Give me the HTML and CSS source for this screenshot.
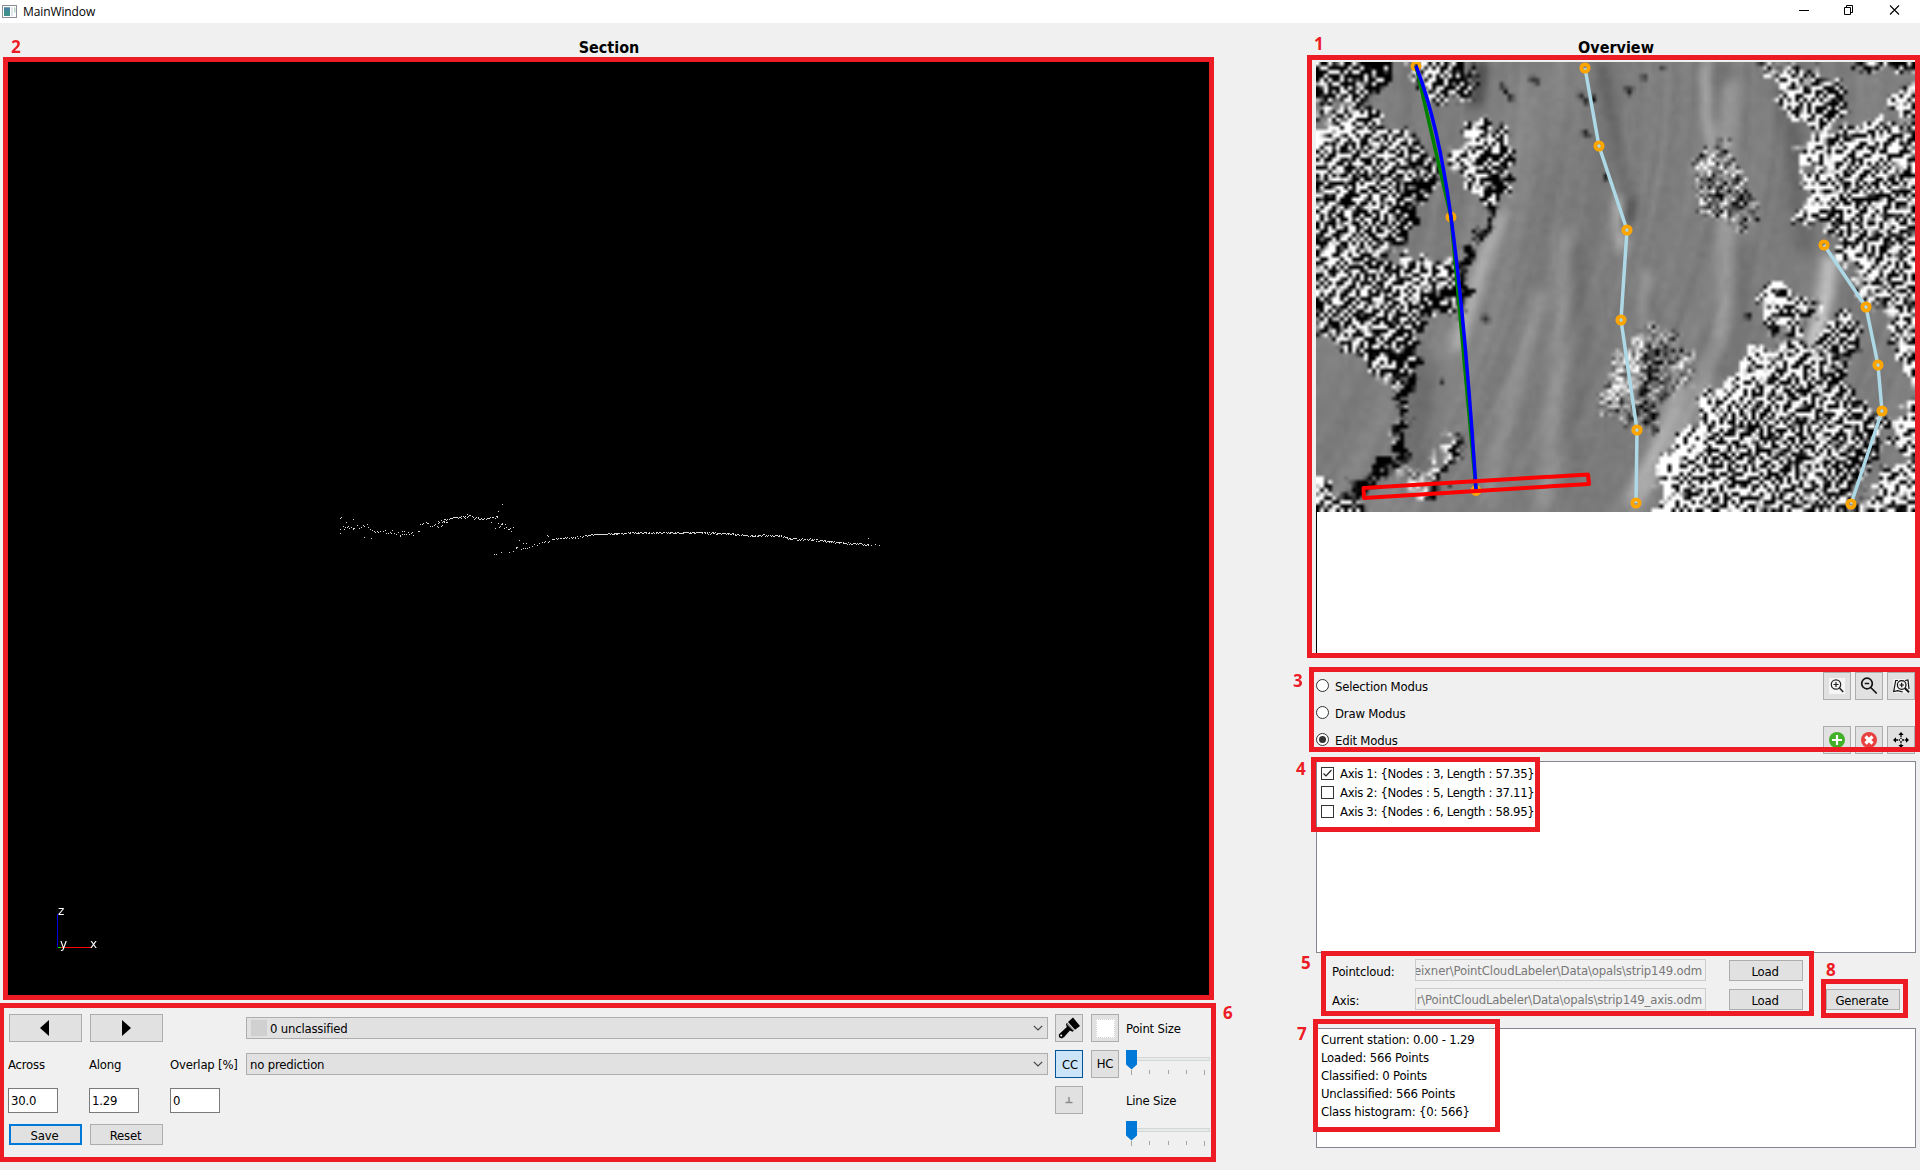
FILE: index.html
```html
<!DOCTYPE html>
<html lang="en">
<head>
<meta charset="utf-8">
<title>MainWindow</title>
<link rel="stylesheet" href="styles.css">
</head>
<body>
<header class="titlebar">
  <svg class="app-icon" width="15" height="13" viewBox="0 0 15 13"><rect x=".5" y=".5" width="14" height="12" fill="#fff" stroke="#8c9096"/><rect x="2" y="2.5" width="6" height="8.500" fill="#3f8f8c"/><rect x="2" y="2.500" width="6" height="3" fill="#4a7fa5"/><rect x="9" y="2.500" width="2" height="8.500" fill="#dfe5e8"/><rect x="12" y="2.500" width="1.500" height="5" fill="#b9d3c6"/></svg>
  <span class="title">MainWindow</span>
  <svg class="win-controls" width="104" height="14" viewBox="0 0 104 14" fill="none" stroke="#000" stroke-width="1"><path d="M1 7.500H11"/><path d="M46.500 4.500h6v7h-6zM48.500 4.500v-2h6v7h-2" /><path d="M92 2.500l9 9M101 2.500l-9 9" stroke-width="1.100"/></svg>
</header>

<main class="content">
  <section class="left">
    <h1 class="heading">Section</h1>
    <div class="view3d">
      <canvas id="points" width="1201" height="933"></canvas>
      <svg class="axes" width="60" height="60" viewBox="0 0 60 60"><path d="M9.500 17v33" stroke="#0000d8"/><path d="M12 50.500h31" stroke="#f00"/><path d="M10 50.500h3" stroke="#0f0"/><text x="10" y="18">z</text><text x="12" y="51">y</text><text x="42" y="51">x</text></svg>
    </div>
    <div class="tools">
      <button class="btn step"><svg width="10" height="16" viewBox="0 0 10 16"><path d="M9 0v16L0 8z"/></svg></button>
      <button class="btn step narrow"><svg width="10" height="16" viewBox="0 0 10 16"><path d="M1 0v16l9-8z"/></svg></button>
      <span></span>
      <div class="combo"><i class="swatch"></i><span>0 unclassified</span><svg class="chev" width="10" height="6" viewBox="0 0 10 6"><path d="M.8.800L5 5 9.200.8"/></svg></div>
      <button class="btn sq"><svg width="22" height="22" viewBox="0 0 22 22"><path d="M10 5l5-4.500L22 9l-5 3.800z"/><path d="M9 6l7.200 7.600-1.700 1.200-2.600-1.300-5.700 6.400-2.500 1.700L1 20.300.8 17.500l8-7.500-1-3z"/><circle cx="3.200" cy="18.500" r="1" fill="#fff"/><path d="M8.500 6.700l7 7" stroke="#e1e1e1" stroke-width=".7"/></svg></button>
      <button class="btn sq"><i class="blank"></i></button>
      <span class="lbl">Point Size</span>

      <span class="lbl">Across</span><span class="lbl">Along</span><span class="lbl">Overlap [%]</span>
      <div class="combo plain"><span>no prediction</span><svg class="chev" width="10" height="6" viewBox="0 0 10 6"><path d="M.8.800L5 5 9.200.8"/></svg></div>
      <button class="btn sq on">CC</button>
      <button class="btn sq">HC</button>
      <svg class="slider" width="84" height="28" viewBox="0 0 84 28"><rect x=".5" y="7.500" width="83" height="3" fill="#e7eaea" stroke="#d3d7d5"/><path d="M0 0h11v14.500l-5.500 5L0 14.500z" fill="#0078d7"/><path d="M5.500 20v5M23.500 20v4M42.500 20v4M60.500 20v4M78.500 20v5" stroke="#aaa69a"/></svg>

      <div class="field">30.0</div><div class="field">1.29</div><div class="field">0</div>
      <span></span>
      <button class="btn sq"><svg width="8" height="7" viewBox="0 0 8 7"><path d="M4 0v5M.5 5.500h7" stroke="#8d8d8d" stroke-width="1.500"/></svg></button>
      <span></span>
      <span class="lbl">Line Size</span>

      <button class="btn small focus">Save</button>
      <button class="btn small narrow">Reset</button>
      <span></span><span></span><span></span><span></span>
      <svg class="slider" width="84" height="28" viewBox="0 0 84 28"><rect x=".5" y="7.500" width="83" height="3" fill="#e7eaea" stroke="#d3d7d5"/><path d="M0 0h11v14.500l-5.500 5L0 14.500z" fill="#0078d7"/><path d="M5.500 20v5M23.500 20v4M42.500 20v4M60.500 20v4M78.500 20v5" stroke="#aaa69a"/></svg>
    </div>
  </section>

  <section class="right">
    <h1 class="heading">Overview</h1>
    <div class="overview">
      <canvas id="terrain" width="150" height="113"></canvas>
      <svg class="axis-lines" width="599" height="450" viewBox="1316 62 599 450" fill="none">
        <g stroke="#ffa500" stroke-width="3.500"><circle cx="1416" cy="66" r="3.700"/><circle cx="1451" cy="217" r="3.700"/><circle cx="1476" cy="490.500" r="3.700"/></g>
        <path d="M1416 66L1451 217L1476 490" stroke="#008000" stroke-width="3.500"/>
        <path d="M1416 66Q1438 122 1451 217Q1465 320 1476 489" stroke="#00f" stroke-width="3.500"/>
        <g stroke="#add8e6" stroke-width="3.500"><path d="M1585 68L1599 146L1627 230L1621 320L1637 430L1636 503"/><path d="M1824 245L1866 307L1878 365L1882 411L1851 504"/></g>
        <g stroke="#ffa500" stroke-width="3.700"><circle cx="1585" cy="68" r="3.700"/><circle cx="1599" cy="146" r="3.700"/><circle cx="1627" cy="230" r="3.700"/><circle cx="1621" cy="320" r="3.700"/><circle cx="1637" cy="430" r="3.700"/><circle cx="1636" cy="503" r="3.700"/><circle cx="1824" cy="245" r="3.700"/><circle cx="1866" cy="307" r="3.700"/><circle cx="1878" cy="365" r="3.700"/><circle cx="1882" cy="411" r="3.700"/><circle cx="1851" cy="504" r="3.700"/></g>
        <path d="M1363.500 488L1588 474.500L1589 484L1364 498z" stroke="#f00" stroke-width="4" stroke-linejoin="round"/>
      </svg>
    </div>

    <div class="modes">
      <div class="radios">
        <label class="radio"><i></i><span>Selection Modus</span></label>
        <label class="radio"><i></i><span>Draw Modus</span></label>
        <label class="radio checked"><i></i><span>Edit Modus</span></label>
      </div>
      <div class="icons">
        <button class="btn sq"><svg width="16" height="16" viewBox="0 0 16 16" fill="none" stroke="#222" stroke-width="1.200"><path d="M0 0h16v16H0z" fill="#f5f5f5" stroke="none"/><circle cx="7" cy="6.500" r="4.700"/><path d="M4.500 6.500h5M7 4v5"/><path d="M10.500 10l3.700 4" stroke-width="1.500"/></svg></button>
        <button class="btn sq"><svg width="18" height="18" viewBox="0 0 18 18" fill="none" stroke="#111" stroke-width="1.700"><circle cx="7" cy="6.500" r="5.300"/><path d="M4.700 6.500h4.500" stroke-width="1.500"/><path d="M10.700 10.500l6 6"/></svg></button>
        <button class="btn sq"><svg width="17" height="16" viewBox="0 0 17 16" fill="none" stroke="#111" stroke-width="1.200"><path d="M0 1h17v14H0z" fill="#f3f3f3" stroke="none"/><path d="M5 2.500H2.700L.7 13.500l4-.8 5 1.300M12 2.500l3-.5 1 9"/><circle cx="8.700" cy="7" r="4.300"/><path d="M6.500 7h4.400M8.700 4.800v4.400"/><path d="M12 10.300l4 4" stroke-width="2"/></svg></button>
        <button class="btn sq"><svg width="16" height="16" viewBox="0 0 16 16"><circle cx="8" cy="8" r="8" fill="#43b02a"/><path d="M8 3v10M3 8h10" stroke="#fff" stroke-width="2.200"/></svg></button>
        <button class="btn sq"><svg width="16" height="16" viewBox="0 0 16 16"><circle cx="8" cy="8" r="8" fill="#e8403f"/><path d="M4.500 4.500l7 7M11.500 4.500l-7 7" stroke="#fff" stroke-width="3.200"/></svg></button>
        <button class="btn sq"><svg width="16" height="16" viewBox="0 0 16 16"><path d="M8 0l2.700 3H5.300zM8 16l2.700-3H5.300zM0 8l3-2.700v5.400zM16 8l-3-2.700v5.400z"/><path d="M8 3v4M8 9v4M3 8h4M9 8h4" stroke="#000" stroke-width="1.300" stroke-dasharray="2 .7"/></svg></button>
      </div>
    </div>

    <div class="list">
      <label class="item"><i><svg width="11" height="11" viewBox="0 0 11 11" fill="none" stroke="#222" stroke-width="1.200"><path d="M1.500 5.500L4 8l5.500-6"/></svg></i>Axis 1: {Nodes : 3, Length : 57.35}</label>
      <label class="item"><i></i>Axis 2: {Nodes : 5, Length : 37.11}</label>
      <label class="item"><i></i>Axis 3: {Nodes : 6, Length : 58.95}</label>
    </div>

    <div class="files">
      <span class="lbl">Pointcloud:</span><div class="path"><span>eixner\PointCloudLabeler\Data\opals\strip149.odm</span></div><button class="btn load">Load</button><span></span>
      <span class="lbl">Axis:</span><div class="path"><span>r\PointCloudLabeler\Data\opals\strip149_axis.odm</span></div><button class="btn load">Load</button><button class="btn load">Generate</button>
    </div>

    <div class="log">
      <p>Current station: 0.00 - 1.29</p>
      <p>Loaded: 566 Points</p>
      <p>Classified: 0 Points</p>
      <p>Unclassified: 566 Points</p>
      <p>Class histogram: {0: 566}</p>
    </div>
  </section>
</main>

<div class="mark m1"><b>1</b></div>
<div class="mark m2"><b>2</b></div>
<div class="mark m3"><b>3</b></div>
<div class="mark m4"><b>4</b></div>
<div class="mark m5"><b>5</b></div>
<div class="mark m6"><b>6</b></div>
<div class="mark m7"><b>7</b></div>
<div class="mark m8"><b>8</b></div>
<script src="draw.js"></script>
</body>
</html>
```

FILE: styles.css
```css
* { box-sizing: border-box; }
body {
  margin: 0; width: 1920px; height: 1170px; overflow: hidden; position: relative;
  background: #f0f0f0; color: #000;
  font: 13px/18px "DejaVu Sans Condensed", "DejaVu Sans", sans-serif;
  font-stretch: condensed; letter-spacing: -0.2px;
}
svg, canvas { display: block; }

.titlebar { display: flex; align-items: center; height: 23px; padding: 0 18px 0 2px; background: #fff; }
.title { flex: 1; margin-left: 6px; font: 12px/22px "Open Sans", sans-serif; letter-spacing: -0.1px; }
.win-controls { margin-top: -3px; }

.content { display: flex; justify-content: space-between; padding: 0 4px 0 8px; }
.left { width: 1202px; }
.right { width: 600px; }
.heading { margin: 0; height: 39px; padding-top: 5px; text-align: center; font-size: 16px; line-height: 40px; font-weight: 700; letter-spacing: 0; }

.view3d { position: relative; height: 933px; width: 1201px; background: #000; }
.axes { position: absolute; left: 40px; top: 835px; font: 12px "DejaVu Sans", sans-serif; fill: #fff; letter-spacing: 0; }

.tools { display: grid; grid-template-columns: 81px 81px 76px 809px 36px 35px 84px; grid-template-rows: repeat(4, 28px); row-gap: 8px; padding-top: 19px; align-items: center; }
.btn { display: flex; align-items: center; justify-content: center; padding: 0; border: 1px solid #adadad; background: #e1e1e1; color: #000; font: inherit; letter-spacing: inherit; }
.step { width: 73px; height: 28px; margin-left: 1px; padding-right: 1px; }
.sq { width: 28px; height: 28px; }
.on { background: #cce4f7; border-color: #005499; padding: 2px 0 0 2px; }
.small { width: 73px; height: 21px; margin-left: 1px; margin-top: -3px; padding: 2px 2px 0 0; }
.focus { border: 2px solid #0078d7; }
.lbl { white-space: nowrap; padding-top: 2px; }
.combo { display: flex; align-items: center; width: 802px; height: 22px; padding: 0 4px 0 4px; border: 1px solid #adadad; background: #e1e1e1; }
.combo span { padding-top: 2px; }
.combo .swatch { width: 16px; height: 16px; margin-right: 3px; background: #d0d0d0; }
.combo.plain { padding-left: 3px; }
.combo .chev { margin-left: auto; fill: none; stroke: #444; stroke-width: 1.200; }
.blank { width: 19px; height: 19px; background: #fff; border: 1px dotted #d4d4d4; }
.field { width: 50px; height: 25px; padding: 3px 2px; border: 1px solid #7a7a7a; background: #fff; }
.slider { overflow: visible; }
.tools .slider:last-child { margin-top: -2px; }

.overview { position: relative; height: 591px; background: #fff; border-left: 1px solid #000; margin-right: 1px; }
#terrain { width: 599px; height: 450px; margin-left: -1px; }
.axis-lines { position: absolute; left: -1px; top: 0; }

.modes { display: flex; justify-content: space-between; height: 82px; margin: 19px 1px 7px 0; }
.radio { display: flex; align-items: center; height: 27px; }
.radio span { padding-top: 2px; }
.radio i { display: flex; align-items: center; justify-content: center; width: 13px; height: 13px; margin-right: 6px; border: 1px solid #333; border-radius: 50%; background: #fff; }
.radio.checked i::after { content: ""; width: 7px; height: 7px; border-radius: 50%; background: #333; }
.icons { display: grid; grid-template-columns: repeat(3, 28px); gap: 26px 4px; }

.list { height: 192px; padding: 2px 4px; border: 1px solid #828790; background: #fff; }
.item { display: flex; align-items: center; height: 19px; letter-spacing: -0.33px; }
.item i { width: 13px; height: 13px; margin-right: 6px; border: 1px solid #333; background: #fff; }

.files { display: grid; grid-template-columns: 83px 314px 97px 74px; grid-template-rows: 23px 23px; row-gap: 6px; padding: 6px 0 0 16px; height: 75px; align-items: start; }
.path { display: flex; justify-content: flex-end; overflow: hidden; width: 291px; height: 22px; padding: 2px 3px 0 0; border: 1px solid #ccc; background: #f0f0f0; color: #787878; white-space: nowrap; letter-spacing: -0.16px; }
.load { width: 74px; height: 21px; margin-top: 1px; padding: 2px 2px 0 0; }
.files .lbl { padding-top: 4px; }

.log { height: 120px; padding: 2px 4px; border: 1px solid #828790; background: #fff; }
.log p { margin: 0; height: 18px; }

.mark { position: absolute; border: 5px solid #ed1c24; }
.mark b { position: absolute; color: #ed1c24; font: 700 17px/18px "Open Sans", sans-serif; letter-spacing: 0; }
.m1 { left: 1307px; top: 55px; width: 613px; height: 603px; }
.m1 b { left: 2px; top: -25px; }
.m2 { left: 3px; top: 57px; width: 1211px; height: 943px; }
.m2 b { left: 3px; top: -24px; }
.m3 { left: 1309px; top: 667px; width: 611px; height: 85px; }
.m3 b { left: -21px; top: 0; }
.m4 { left: 1311px; top: 757px; width: 229px; height: 75px; }
.m4 b { left: -20px; top: -2px; }
.m5 { left: 1321px; top: 951px; width: 493px; height: 65px; }
.m5 b { left: -25px; top: -2px; }
.m6 { left: -1px; top: 1003px; width: 1217px; height: 159px; }
.m6 b { left: 1219px; top: -4px; }
.m7 { left: 1313px; top: 1019px; width: 187px; height: 113px; }
.m7 b { left: -21px; top: 1px; }
.m8 { left: 1821px; top: 979px; width: 87px; height: 39px; }
.m8 b { left: 0; top: -23px; }
```

FILE: draw.js
```js
let seed = 7;
function rnd() { seed = (seed * 1664525 + 1013904223) >>> 0; return seed / 4294967296; }

// Point cloud profile
(function () {
  const g = document.getElementById('points').getContext('2d');
  g.fillStyle = '#d8d8d8';
  const dot = (x, y) => g.fillRect(Math.round(x / 2.703 + 312), Math.round(y / 3 + 428), 1, 1);
  const run = (pts, step, jit) => {
    for (let i = 0; i < pts.length - 1; i++) {
      const [a, b] = pts[i], [c, d] = pts[i + 1];
      for (let x = a; x < c; x += step * (0.5 + rnd())) dot(x, b + (d - b) * (x - a) / (c - a) + (rnd() - 0.5) * jit);
    }
  };
  run([[512, 187], [530, 175], [560, 172], [600, 160], [630, 147]], 6, 7);
  run([[630, 147], [690, 142], [735, 133]], 3.5, 6);
  run([[735, 133], [800, 130], [860, 128], [1040, 127]], 2.3, 3.500);
  run([[1040, 127], [1100, 131], [1180, 136], [1240, 136], [1280, 147], [1330, 148], [1375, 155], [1440, 160], [1485, 164]], 2.5, 6);
  run([[55, 110], [90, 116], [120, 106], [150, 119], [200, 128], [255, 130]], 4.5, 14);
  run([[265, 115], [290, 100], [320, 108], [345, 94]], 4, 20);
  run([[320, 95], [360, 84], [400, 79], [440, 86], [480, 80]], 3, 8);
  run([[480, 102], [500, 108], [523, 118]], 3, 20);
  [[55, 84], [57, 82], [90, 88], [69, 97], [55, 130], [120, 142], [139, 145], [217, 139], [396, 73], [493, 43], [480, 64],
   [461, 97], [474, 115], [471, 193], [477, 193], [488, 187], [537, 151], [550, 160], [558, 160], [613, 136], [616, 137],
   [1482, 145], [1490, 164], [1500, 163], [1510, 164]].forEach(p => dot(p[0], p[1]));
})();

// Hillshade: smooth riverbed with rough tree canopies
(function () {
  const W = 150, H = 113, S = 4;
  const layer = bg => {
    const c = document.createElement('canvas'); c.width = W; c.height = H;
    const g = c.getContext('2d', { willReadFrequently: true });
    g.fillStyle = bg; g.fillRect(0, 0, W, H); g.scale(1 / S, 1 / S); return g;
  };
  const trace = (g, p) => { g.beginPath(); p.forEach(([x, y], i) => i ? g.lineTo(x, y) : g.moveTo(x, y)); };

  const base = layer('#808080');
  const soft = (p, col, w, blur) => { base.filter = 'blur(' + blur * .8 + 'px)'; base.strokeStyle = col; base.lineWidth = w; base.lineJoin = 'round'; trace(base, p); base.stroke(); };
  soft([[230, 0], [190, 130], [150, 260], [60, 450]], 'rgba(150,150,150,.5)', 50, 4);
  soft([[390, 0], [392, 60], [398, 90]], '#b8b8b8', 7, 1);
  soft([[403, 0], [405, 60]], '#686868', 9, 1);
  soft([[415, 20], [408, 90], [412, 225], [405, 290], [370, 355], [335, 410], [315, 450]], '#a4a4a4', 14, 2);
  soft([[430, 180], [425, 270], [400, 320]], '#6c6c6c', 14, 2);
  soft([[186, 150], [165, 210], [140, 290]], '#b0b0b0', 13, 1.5);
  soft([[285, 0], [300, 70], [310, 130], [318, 160]], '#646464', 8, 1);
  soft([[302, 135], [306, 190]], '#d8d8d8', 6, 1);
  soft([[320, 138], [308, 168]], '#484848', 5, 1);
  soft([[330, 210], [330, 285]], '#b4b4b4', 6, 1);
  soft([[336, 230], [335, 300]], '#565656', 4, 1);
  soft([[250, 170], [245, 270], [228, 450]], '#999', 16, 2);
  soft([[262, 180], [268, 280], [255, 400]], '#727272', 11, 2);
  soft([[225, 230], [195, 340], [170, 440]], '#9c9c9c', 12, 2);
  soft([[465, 20], [480, 90], [490, 190]], '#666', 15, 2);
  soft([[515, 195], [508, 240], [495, 290]], '#c4c4c4', 15, 1.500);
  soft([[365, 320], [350, 370], [320, 440]], '#b6b6b6', 12, 2);
  soft([[110, 300], [95, 420]], '#696969', 25, 3);
  soft([[165, 0], [160, 45]], '#404040', 14, 2);
  base.filter = 'none'; base.fillStyle = '#080808';
  [[214, 15, 5, 4], [219, 18, 5, 4], [184, 22, 4, 4], [188, 27, 4, 5], [193, 32, 4, 7], [263, 31, 4, 6], [268, 37, 5, 5], [276, 34, 4, 6],
   [309, 26, 9, 3], [312, 29, 4, 4], [327, 12, 3, 7], [346, 4, 3, 4], [267, 68, 4, 6], [271, 72, 3, 3], [289, 112, 3, 7], [166, 255, 7, 3], [170, 258, 3, 4],
   [453, 228, 9, 7], [430, 252, 6, 6], [455, 272, 7, 3], [124, 319, 4, 4]].forEach(r => base.fillRect(...r));

  // Red carries canopy roughness, green carries tone (128 = neutral)
  const mask = layer('#008000');
  mask.lineJoin = 'round';
  const tree = (p, rough, tone) => {
    mask.fillStyle = mask.strokeStyle = 'rgb(' + rough + ',' + (tone || 128) + ',0)';
    mask.lineWidth = rough > 200 ? 8 : 1; trace(mask, p); mask.closePath(); mask.fill(); mask.stroke();
  };
  const ridge = (p, w, rough, tone) => { mask.lineWidth = w; mask.strokeStyle = 'rgb(' + rough + ',' + tone + ',0)'; trace(mask, p); mask.stroke(); };
  ridge([[186, 126], [168, 168], [150, 200], [140, 250]], 12, 160, 0);
  ridge([[98, 285], [88, 335], [85, 400]], 12, 165, 0);
  ridge([[85, 398], [55, 415], [30, 445]], 15, 165, 0);
  ridge([[150, 370], [130, 405], [112, 445]], 10, 150, 0);
  ridge([[139, 368], [122, 410]], 7, 150, 240);
  ridge([[76, 310], [78, 325]], 9, 150, 240);
  ridge([[80, 355], [76, 395]], 5, 100, 200);
  tree([[0, 0], [75, 0], [72, 18], [50, 30], [20, 36], [0, 52]], 210, 90);
  tree([[100, 0], [150, 0], [150, 30], [125, 42], [105, 25]], 220, 110);
  tree([[35, 42], [62, 50], [60, 68], [95, 75], [115, 100], [118, 120], [95, 150], [92, 175], [75, 185], [30, 182], [0, 197], [0, 110], [10, 60]], 255, 132);
  tree([[155, 65], [180, 62], [195, 100], [185, 135], [165, 130], [140, 105]], 240, 130);
  tree([[0, 205], [40, 190], [60, 200], [125, 200], [140, 215], [135, 250], [110, 255], [95, 290], [90, 318], [70, 312], [40, 292], [15, 278], [0, 250]], 240, 134);
  tree([[0, 420], [25, 430], [45, 450], [0, 450]], 230, 130);
  tree([[85, 404], [122, 412], [105, 440], [88, 430]], 120, 190);
  tree([[390, 85], [405, 75], [425, 110], [440, 145], [440, 160], [412, 170], [405, 160], [385, 160], [380, 110]], 165, 130);
  tree([[460, 15], [480, 10], [520, 20], [528, 45], [510, 65], [490, 65], [475, 45]], 240, 140);
  tree([[600, 20], [575, 40], [590, 60], [600, 55]], 230, 130);
  tree([[540, 0], [600, 0], [600, 6], [545, 7]], 200, 60);
  tree([[440, 0], [475, 0], [465, 14]], 150, 90);
  tree([[490, 80], [560, 60], [580, 75], [600, 68], [600, 238], [575, 250], [555, 240], [530, 195], [520, 165], [490, 155], [496, 110]], 250, 132);
  tree([[450, 235], [470, 225], [500, 245], [480, 265], [465, 270], [448, 260]], 210, 130);
  tree([[505, 265], [530, 255], [543, 280], [535, 297], [512, 287]], 230, 130);
  tree([[585, 250], [600, 240], [600, 325], [590, 300], [578, 280]], 240, 140);
  tree([[310, 290], [330, 265], [345, 265], [385, 300], [375, 320], [340, 345], [345, 370], [310, 368], [285, 350], [290, 315]], 100, 128);
  ridge([[322, 275], [308, 315], [298, 345]], 10, 120, 215);
  ridge([[338, 285], [328, 340], [335, 370]], 8, 130, 20);
  ridge([[378, 295], [348, 318]], 7, 130, 230);
  ridge([[355, 288], [338, 318]], 6, 130, 20);
  tree([[465, 283], [500, 290], [525, 310], [545, 350], [565, 360], [560, 395], [540, 420], [530, 450], [345, 450], [350, 410], [375, 370], [400, 325], [425, 315], [432, 300]], 255, 132);
  tree([[600, 350], [575, 370], [590, 390], [600, 395], [575, 410], [570, 430], [545, 440], [550, 452], [600, 452]], 240, 150);

  // Blurred copy of the canopy height gives the large-scale dome shading
  const dome = document.createElement('canvas'); dome.width = W; dome.height = H;
  const dg = dome.getContext('2d', { willReadFrequently: true });
  dg.filter = 'blur(3.5px)'; dg.drawImage(mask.canvas, 0, 0);

  const B = base.getImageData(0, 0, W, H).data, M = mask.getImageData(0, 0, W, H).data, D = dg.getImageData(0, 0, W, H).data;
  const h = Array.from({ length: (W + 4) * (H + 4) }, rnd);
  const lat = Array.from({ length: 4096 }, rnd);
  const noise = (x, y) => {
    const i = Math.floor(x), j = Math.floor(y), u = x - i, v = y - j;
    const n = (a, b) => lat[((a * 57 + b * 131) % 4096 + 4096) % 4096];
    return (n(i, j) * (1 - u) + n(i + 1, j) * u) * (1 - v) + (n(i, j + 1) * (1 - u) + n(i + 1, j + 1) * u) * v;
  };
  const at = (A, x, y, k) => A[(Math.max(0, Math.min(H - 1, y)) * W + Math.max(0, Math.min(W - 1, x))) * 4 + k];
  const out = document.getElementById('terrain').getContext('2d');
  const img = out.createImageData(W, H);
  for (let y = 0; y < H; y++) for (let x = 0; x < W; x++) {
    const dx = Math.round((noise(x / 2.2, y / 2.2) - .5) * 5), dy = Math.round((noise(x / 2.2 + 40, y / 2.2) - .5) * 5);
    const r = at(M, x + dx, y + dy, 0) / 255, tone = at(M, x + dx, y + dy, 1);
    const flow = (x * 1.33 + y * y * .0039) / 2.2;
    let v = B[(y * W + x) * 4] + (noise(flow, y / 34) - .5) * 16 + (noise(x / 1.200, y / 1.5) - .5) * 9 - 2;
    if (r > 0) {
      const w = W + 4, i = (y + 1) * w + x + 1;
      // Slope towards the upper-left light
      const slope = h[i + 1] + h[i + w] - h[i] * 1.5 - h[i - 1] * .3 - h[i - w] * .2;
      const sun = (at(D, x + 3, y + 2, 0) - at(D, x - 3, y - 2, 0)) * 1.9;
      if (r > .7) v = 128 + (tone - 128) * 2 + slope * 720 + sun * 1.3 + (noise(x / 4 + 9, y / 4 + 70) - .5) * 180;
      else v = v * (1 - r) + (tone + (tone - 128) * .8 + slope * 190 + sun * .3 + (noise(x / 3 + 9, y / 3 + 70) - .5) * 200) * r;
    }
    const o = (y * W + x) * 4;
    img.data[o] = img.data[o + 1] = img.data[o + 2] = v; img.data[o + 3] = 255;
  }
  out.putImageData(img, 0, 0);
})();
```
